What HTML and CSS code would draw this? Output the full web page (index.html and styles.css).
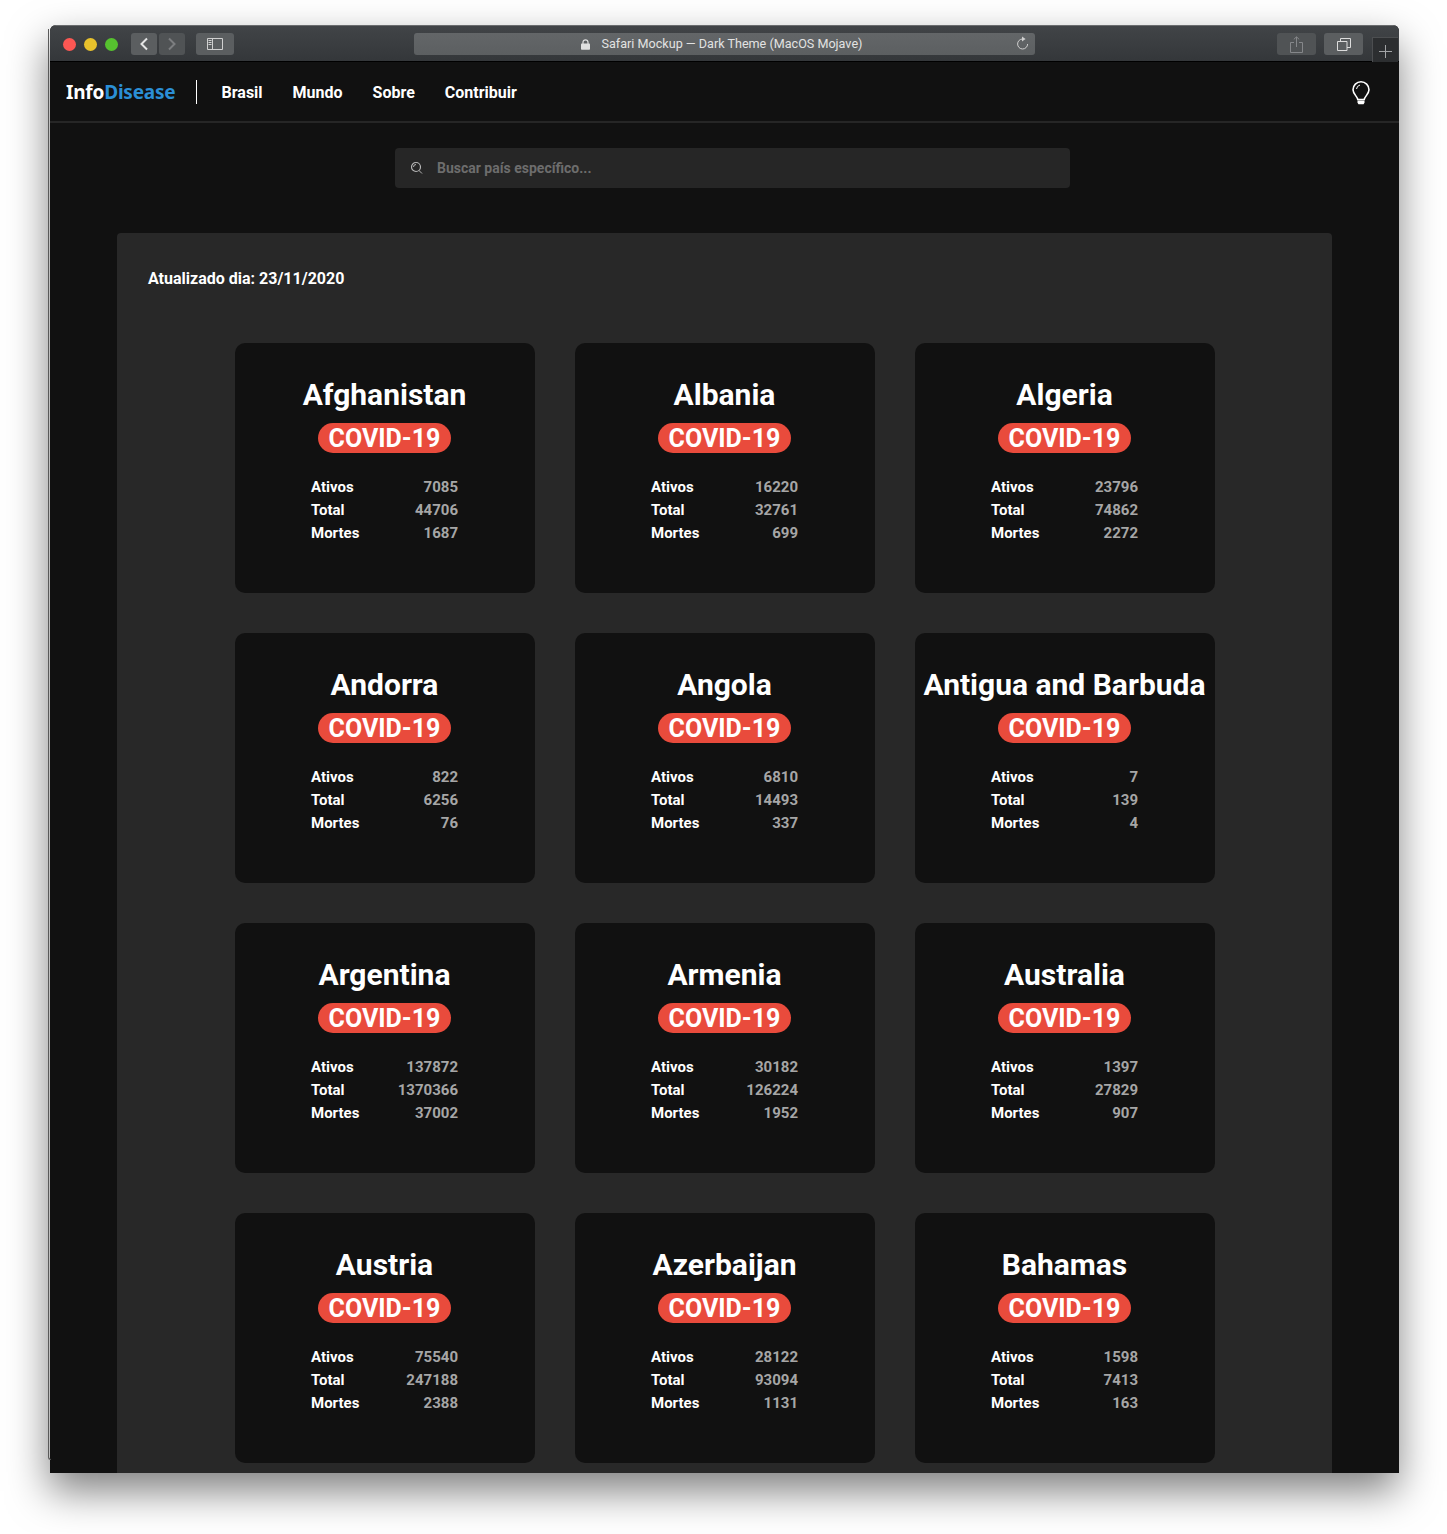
FILE: index.html
```html
<!DOCTYPE html>
<html lang="en">
<head>
  <meta charset="UTF-8" />
  <meta name="viewport" content="width=device-width, initial-scale=1.0"/>
  <title>InfoDisease</title>
  <link rel="stylesheet" href="styles.css">
</head>
<body>

<div class="window-edge"></div>

<div class="window">
  <div class="toolbar">
    <span class="light light-red"></span>
    <span class="light light-yellow"></span>
    <span class="light light-green"></span>

    <div class="tool-btn btn-back">
      <svg width="10" height="14" viewBox="0 0 10 14"><path d="M8 1.5 2.5 7 8 12.5" fill="none" stroke="#e4e4e4" stroke-width="2"/></svg>
    </div>
    <div class="tool-btn btn-forward">
      <svg width="10" height="14" viewBox="0 0 10 14"><path d="M2 1.5 7.5 7 2 12.5" fill="none" stroke="#7c7e80" stroke-width="2"/></svg>
    </div>
    <div class="tool-btn btn-sidebar">
      <svg width="16" height="12" viewBox="0 0 16 12"><path d="M.5.5h15v11H.5zM5.5.5v11" fill="none" stroke="#d0d0d0"/><path d="M1.5 2.5h3M1.5 4.5h3M1.5 6.5h3" stroke="#d0d0d0"/></svg>
    </div>

    <div class="address">
      <svg class="lock" width="9" height="11" viewBox="0 0 9 11"><path d="M2 5V3.3a2.5 2.5 0 0 1 5 0V5" fill="none" stroke="#e0e0e0" stroke-width="1.2"/><rect y="4.6" width="9" height="6.2" rx=".8" fill="#e0e0e0"/></svg>
      <span>Safari Mockup — Dark Theme (MacOS Mojave)</span>
      <svg class="reload" width="14" height="15" viewBox="0 0 14 15"><path d="M7.6 3a5 5 0 1 0 5 5" fill="none" stroke="#cfcfcf" stroke-width="1"/><path d="M7 .4 10.6 3 7 5.4z" fill="#cfcfcf"/></svg>
    </div>

    <div class="tool-btn btn-share">
      <svg width="13" height="17" viewBox="0 0 13 17"><path d="M4 6.5H.5v10h12v-10H9M6.5 11V1M3.8 3.4 6.500 .8l2.700 2.600" fill="none" stroke="#85878a"/></svg>
    </div>
    <div class="tool-btn btn-tabs">
      <svg width="14" height="13" viewBox="0 0 14 13"><path d="M.5 3.500h9.500v9H.5zM3.500 3.500V.5h10v9H10" fill="none" stroke="#dcdcdc"/></svg>
    </div>
    <div class="new-tab">
      <svg width="13" height="13" viewBox="0 0 13 13"><path d="M6.500 0v13M0 6.500h13" stroke="#a2a4a6"/></svg>
    </div>
  </div>

  <nav class="navbar">
    <a class="logo">Info<span>Disease</span></a>
    <ul class="nav-links">
      <li>Brasil</li>
      <li>Mundo</li>
      <li>Sobre</li>
      <li>Contribuir</li>
    </ul>
    <svg class="bulb" width="18" height="24" viewBox="0 0 18 24"><path d="M5.800 18.500C5.300 15.500 1 12.800 1 8.800a8 8 0 0 1 16 0c0 4-4.300 6.700-4.800 9.700z" fill="none" stroke="#fff" stroke-width="1.600"/><path d="M4.500 8a4.800 4.800 0 0 1 3.500-4" fill="none" stroke="#fff"/><path d="M5.500 19.500h7v2.200l-1 1.500h-5l-1-1.500z" fill="#fff"/></svg>
  </nav>

  <div class="search">
    <svg width="13" height="13" viewBox="0 0 13 13"><circle cx="6" cy="6" r="4.500" fill="none" stroke="#b5b5b5" stroke-width="1.200"/><path d="M9 9.500l3 3M3.500 6A2.500 2.500 0 0 1 6 3.500" fill="none" stroke="#b5b5b5"/></svg>
    <span>Buscar país específico...</span>
  </div>

  <main class="panel">
    <p class="updated">Atualizado dia: 23/11/2020</p>

    <div class="card-grid">
      <div class="card">
        <h2>Afghanistan</h2>
        <span class="badge">COVID-19</span>
        <dl class="stats"><dt>Ativos</dt><dd>7085</dd><dt>Total</dt><dd>44706</dd><dt>Mortes</dt><dd>1687</dd></dl>
      </div>
      <div class="card">
        <h2>Albania</h2>
        <span class="badge">COVID-19</span>
        <dl class="stats"><dt>Ativos</dt><dd>16220</dd><dt>Total</dt><dd>32761</dd><dt>Mortes</dt><dd>699</dd></dl>
      </div>
      <div class="card">
        <h2>Algeria</h2>
        <span class="badge">COVID-19</span>
        <dl class="stats"><dt>Ativos</dt><dd>23796</dd><dt>Total</dt><dd>74862</dd><dt>Mortes</dt><dd>2272</dd></dl>
      </div>
      <div class="card">
        <h2>Andorra</h2>
        <span class="badge">COVID-19</span>
        <dl class="stats"><dt>Ativos</dt><dd>822</dd><dt>Total</dt><dd>6256</dd><dt>Mortes</dt><dd>76</dd></dl>
      </div>
      <div class="card">
        <h2>Angola</h2>
        <span class="badge">COVID-19</span>
        <dl class="stats"><dt>Ativos</dt><dd>6810</dd><dt>Total</dt><dd>14493</dd><dt>Mortes</dt><dd>337</dd></dl>
      </div>
      <div class="card">
        <h2>Antigua and Barbuda</h2>
        <span class="badge">COVID-19</span>
        <dl class="stats"><dt>Ativos</dt><dd>7</dd><dt>Total</dt><dd>139</dd><dt>Mortes</dt><dd>4</dd></dl>
      </div>
      <div class="card">
        <h2>Argentina</h2>
        <span class="badge">COVID-19</span>
        <dl class="stats"><dt>Ativos</dt><dd>137872</dd><dt>Total</dt><dd>1370366</dd><dt>Mortes</dt><dd>37002</dd></dl>
      </div>
      <div class="card">
        <h2>Armenia</h2>
        <span class="badge">COVID-19</span>
        <dl class="stats"><dt>Ativos</dt><dd>30182</dd><dt>Total</dt><dd>126224</dd><dt>Mortes</dt><dd>1952</dd></dl>
      </div>
      <div class="card">
        <h2>Australia</h2>
        <span class="badge">COVID-19</span>
        <dl class="stats"><dt>Ativos</dt><dd>1397</dd><dt>Total</dt><dd>27829</dd><dt>Mortes</dt><dd>907</dd></dl>
      </div>
      <div class="card">
        <h2>Austria</h2>
        <span class="badge">COVID-19</span>
        <dl class="stats"><dt>Ativos</dt><dd>75540</dd><dt>Total</dt><dd>247188</dd><dt>Mortes</dt><dd>2388</dd></dl>
      </div>
      <div class="card">
        <h2>Azerbaijan</h2>
        <span class="badge">COVID-19</span>
        <dl class="stats"><dt>Ativos</dt><dd>28122</dd><dt>Total</dt><dd>93094</dd><dt>Mortes</dt><dd>1131</dd></dl>
      </div>
      <div class="card">
        <h2>Bahamas</h2>
        <span class="badge">COVID-19</span>
        <dl class="stats"><dt>Ativos</dt><dd>1598</dd><dt>Total</dt><dd>7413</dd><dt>Mortes</dt><dd>163</dd></dl>
      </div>
    </div>
  </main>
</div>

</body>
</html>
```

FILE: styles.css
```css
html, body {
  margin: 0;
  height: 1534px;
  overflow: hidden;
  background: #fff;
}

body {
  font-family: Roboto, "Liberation Sans", sans-serif;
  color: #fff;
  padding: 25px 48px 0 50px;
  box-sizing: border-box;
}

.window {
  position: relative;
  height: 1448px;
  background: #111;
  box-shadow: -1px 18px 40px rgba(0,0,0,0.5);
  overflow: hidden;
  border-radius: 6px 6px 0 0;
}

/* thin lighter frame line that stops short of the bottom */
.window-edge {
  position: absolute;
  z-index: 1;
  left: 48px;
  top: 29px;
  width: 3px;
  height: 1431px;
  box-sizing: border-box;
  border-left: 1px solid #5a5a5a;
  border-bottom: 1px solid #5a5a5a;
  border-bottom-left-radius: 3px;
}

/* toolbar */
.toolbar {
  display: flex;
  align-items: flex-start;
  height: 37px;
  box-sizing: border-box;
  padding: 7px 1px 0 13px;
  background: linear-gradient(#414447, #34373a);
  border-top: 1px solid #6a6c6e;
  border-bottom: 1px solid #000;
}

.light {
  width: 13px;
  height: 13px;
  border-radius: 50%;
  margin: 5px 8px 0 0;
}
.light-red { background: #fc5753; }
.light-yellow { background: #e8c22c; }
.light-green { background: #56c22f; margin-right: 0; }

.tool-btn {
  height: 22px;
  border-radius: 3px;
  background: #5b5e60;
  display: flex;
  align-items: center;
  justify-content: center;
}

.btn-back { width: 26px; margin-left: 13px; }
.btn-forward { width: 26px; margin-left: 2px; background: #505355; }
.btn-sidebar { width: 38px; margin-left: 11px; }
.btn-share { width: 39px; margin-left: 242px; background: #505355; }
.btn-tabs { width: 39px; margin-left: 8px; }

.address {
  position: relative;
  width: 621px;
  height: 22px;
  margin-left: 180px;
  border-radius: 3px;
  background: linear-gradient(#636668, #5c5f61);
  color: #e2e2e2;
  font-size: 12.6px;
  line-height: 22px;
  display: flex;
  align-items: center;
  justify-content: center;
  gap: 12px;
  padding-right: 6px;
  box-sizing: border-box;
}

.reload {
  position: absolute;
  right: 6px;
  top: 3px;
}

.new-tab {
  width: 26px;
  height: 25px;
  margin: 4px 0 0 9px;
  box-sizing: border-box;
  background: #2c2e30;
  border: 1px solid #4c4e50;
  border-bottom: none;
  border-right: none;
  display: flex;
  align-items: center;
  justify-content: center;
  padding-top: 3px;
}

/* navbar */
.navbar {
  height: 61px;
  box-sizing: border-box;
  display: flex;
  align-items: center;
  padding: 1px 29px 0 16px;
  background: #111;
  border-bottom: 2px solid #262626;
}

.logo {
  font-family: "Noto Sans", sans-serif;
  font-size: 19px;
  letter-spacing: -0.2px;
  font-weight: 700;
  color: #fff;
  padding-right: 20px;
  border-right: 1px solid #fff;
  line-height: 24px;
}
.logo span { color: #2b8fd6; }

.nav-links {
  list-style: none;
  display: flex;
  gap: 30px;
  margin: 0 0 0 25px;
  padding: 0;
  font-size: 16px;
  font-weight: 700;
  flex: 1;
}

.bulb { display: block; margin-top: 1px; }

/* search */
.search {
  width: 675px;
  height: 40px;
  margin: 25px 0 0 345px;
  background: #262626;
  border-radius: 4px;
  display: flex;
  align-items: center;
  gap: 14px;
  padding-left: 15px;
  box-sizing: border-box;
  color: #6d6d6d;
  font-size: 14px;
  font-weight: 700;
}
.search svg { margin-bottom: 2px; }

/* main panel */
.panel {
  width: 1215px;
  height: 1300px;
  margin: 45px 0 0 67px;
  background: #282828;
  border-radius: 4px 4px 0 0;
  padding: 36px 0 0;
  box-sizing: border-box;
}

.updated {
  margin: 0 0 0 31px;
  font-size: 16px;
  line-height: 19px;
  font-weight: 700;
}

.card-grid {
  display: grid;
  grid-template-columns: repeat(3, 300px);
  grid-auto-rows: 250px;
  gap: 40px;
  justify-content: center;
  margin-top: 55px;
}

.card {
  background: #111;
  border-radius: 10px;
  padding-top: 34px;
  box-sizing: border-box;
  text-align: center;
}

.card h2 {
  margin: 0;
  font-size: 30px;
  line-height: 35px;
  font-weight: 700;
  white-space: nowrap;
}

.badge {
  display: inline-block;
  margin-top: 11px;
  padding: 0 11px;
  height: 30px;
  line-height: 32px;
  border-radius: 15px;
  background: #e94b3c;
  font-size: 25px;
  font-weight: 700;
}

.stats {
  display: grid;
  grid-template-columns: auto auto;
  justify-content: space-between;
  width: 147px;
  margin: 23px auto 0;
  font-size: 15px;
  line-height: 23px;
  font-weight: 700;
}
.stats dt { text-align: left; }
.stats dd { margin: 0; text-align: right; color: #a6a6a6; }
```
